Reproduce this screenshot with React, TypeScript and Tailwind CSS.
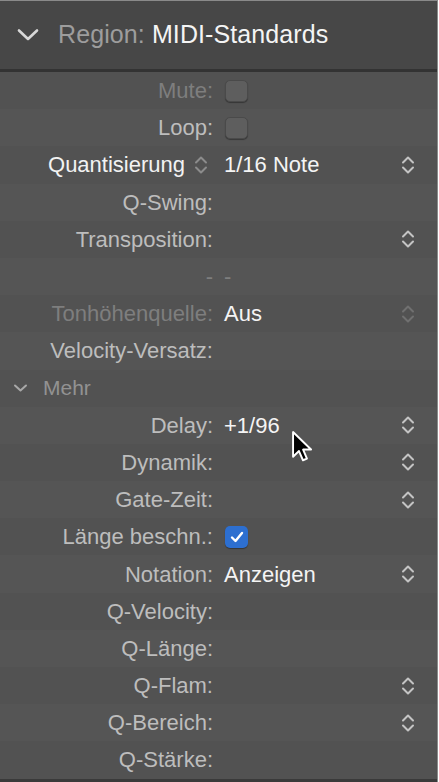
import React from "react";

type Row = {
  label: string;
  tone?: "normal" | "dim" | "bright";
  value?: string;
  valueDim?: boolean;
  box?: "empty" | "checked";
  stepper?: "on" | "dim";
  labelStepper?: boolean;
};

const topRows: Row[] = [
  { label: "Mute:", tone: "dim", box: "empty" },
  { label: "Loop:", box: "empty" },
  { label: "Quantisierung", tone: "bright", labelStepper: true, value: "1/16 Note", stepper: "on" },
  { label: "Q-Swing:" },
  { label: "Transposition:", stepper: "on" },
  { label: "-", tone: "dim", value: "-", valueDim: true },
  { label: "Tonhöhenquelle:", tone: "dim", value: "Aus", stepper: "dim" },
  { label: "Velocity-Versatz:" },
];

const moreRows: Row[] = [
  { label: "Delay:", value: "+1/96", stepper: "on" },
  { label: "Dynamik:", stepper: "on" },
  { label: "Gate-Zeit:", stepper: "on" },
  { label: "Länge beschn.:", box: "checked" },
  { label: "Notation:", value: "Anzeigen", stepper: "on" },
  { label: "Q-Velocity:" },
  { label: "Q-Länge:" },
  { label: "Q-Flam:", stepper: "on" },
  { label: "Q-Bereich:", stepper: "on" },
  { label: "Q-Stärke:" },
];

function Stepper({ className }: { className: string }) {
  return (
    <svg width="14" height="24" viewBox="0 0 14 24" fill="none" className={className}>
      <path d="M2 9.5 L7 4.5 L12 9.5" stroke="currentColor" strokeWidth="2" strokeLinecap="round" strokeLinejoin="round" />
      <path d="M2 14.5 L7 19.5 L12 14.5" stroke="currentColor" strokeWidth="2" strokeLinecap="round" strokeLinejoin="round" />
    </svg>
  );
}

function Checkbox({ checked }: { checked?: boolean }) {
  if (checked) {
    return (
      <div className="ml-px flex h-[22px] w-[23px] items-center justify-center rounded-[5px] bg-[#2d6fd0] shadow-[0_1px_1px_rgba(0,0,0,0.35)]">
        <svg width="16" height="14" viewBox="0 0 16 14" fill="none">
          <path d="M3 7.5 L6.5 11 L13 3" stroke="#ffffff" strokeWidth="2.4" strokeLinecap="round" strokeLinejoin="round" />
        </svg>
      </div>
    );
  }
  return <div className="ml-px h-[22px] w-[23px] rounded-[5px] border border-[#4a4a4a] bg-[#5e5e5e] shadow-[0_1px_1px_rgba(0,0,0,0.35)]" />;
}

function InspectorRow({ row, odd }: { row: Row; odd: boolean }) {
  const labelColor =
    row.tone === "dim" ? "text-[#7e7e7e]" : row.tone === "bright" ? "text-[#f2f2f2]" : "text-[#bdbdbd]";
  return (
    <div className={`flex h-[37.2px] items-center pr-[22px] ${odd ? "bg-[#555555]" : "bg-[#525252]"}`}>
      <div className={`flex w-[213px] shrink-0 items-center justify-end ${labelColor}`}>
        {row.labelStepper ? (
          <div className="flex items-center gap-[9px] pr-[5px]">
            <span>{row.label}</span>
            <Stepper className="text-[#8c8c8c]" />
          </div>
        ) : (
          <span>{row.label}</span>
        )}
      </div>
      <div className="ml-[11px] flex flex-1 items-center">
        {row.box ? <Checkbox checked={row.box === "checked"} /> : null}
        {row.value ? (
          <span className={row.valueDim ? "text-[#7e7e7e]" : "text-[#f4f4f4]"}>{row.value}</span>
        ) : null}
      </div>
      {row.stepper ? <Stepper className={row.stepper === "dim" ? "text-[#707070]" : "text-[#c4c4c4]"} /> : null}
    </div>
  );
}

export default function App() {
  return (
    <div className="relative h-[782px] w-[439px] overflow-hidden bg-white font-['Liberation_Sans',Arial,sans-serif] text-[22px]">
      <div className="flex h-full w-[438px] flex-col border-t border-r border-[#8a8a8a] bg-[#525252]">
        <header className="flex h-[68px] shrink-0 items-center bg-[#474747] pl-[17px]">
          <svg width="22" height="14" viewBox="0 0 22 14" fill="none">
            <path d="M2 2.5 L11 11 L20 2.5" stroke="#d8d8d8" strokeWidth="2.6" strokeLinecap="round" strokeLinejoin="round" />
          </svg>
          <h1 className="ml-[19px] text-[25px] tracking-[0.1px]">
            <span className="text-[#9d9d9d]">Region: </span>
            <span className="text-[#f4f4f4]">MIDI-Standards</span>
          </h1>
        </header>
        <div className="h-[3px] shrink-0 bg-[#333333]" />

        {topRows.map((row, i) => (
          <InspectorRow key={row.label + i} row={row} odd={i % 2 === 1} />
        ))}

        <div className="flex h-[37.2px] items-center bg-[#525252] pl-[13px] text-[21px] text-[#929292]">
          <svg width="15" height="10" viewBox="0 0 15 10" fill="none">
            <path d="M2 2.5 L7.5 7.5 L13 2.5" stroke="#a8a8a8" strokeWidth="2" strokeLinecap="round" strokeLinejoin="round" />
          </svg>
          <span className="ml-[15px]">Mehr</span>
        </div>

        {moreRows.map((row, i) => (
          <InspectorRow key={row.label} row={row} odd={i % 2 === 0} />
        ))}

        <div className="flex-1 bg-[#3a3a3a]" />
      </div>

      {/* mouse pointer over the Delay row */}
      <svg
        width="22"
        height="33"
        viewBox="0 0 16 24"
        className="absolute left-[291px] top-[430px]"
      >
        <path
          d="M1.5 1.5 L1.5 19.5 L5.8 15.3 L8.7 22 L11.6 20.8 L8.8 14.2 L14.6 14.2 Z"
          fill="#000000"
          stroke="#ffffff"
          strokeWidth="1.4"
          strokeLinejoin="round"
        />
      </svg>
    </div>
  );
}
